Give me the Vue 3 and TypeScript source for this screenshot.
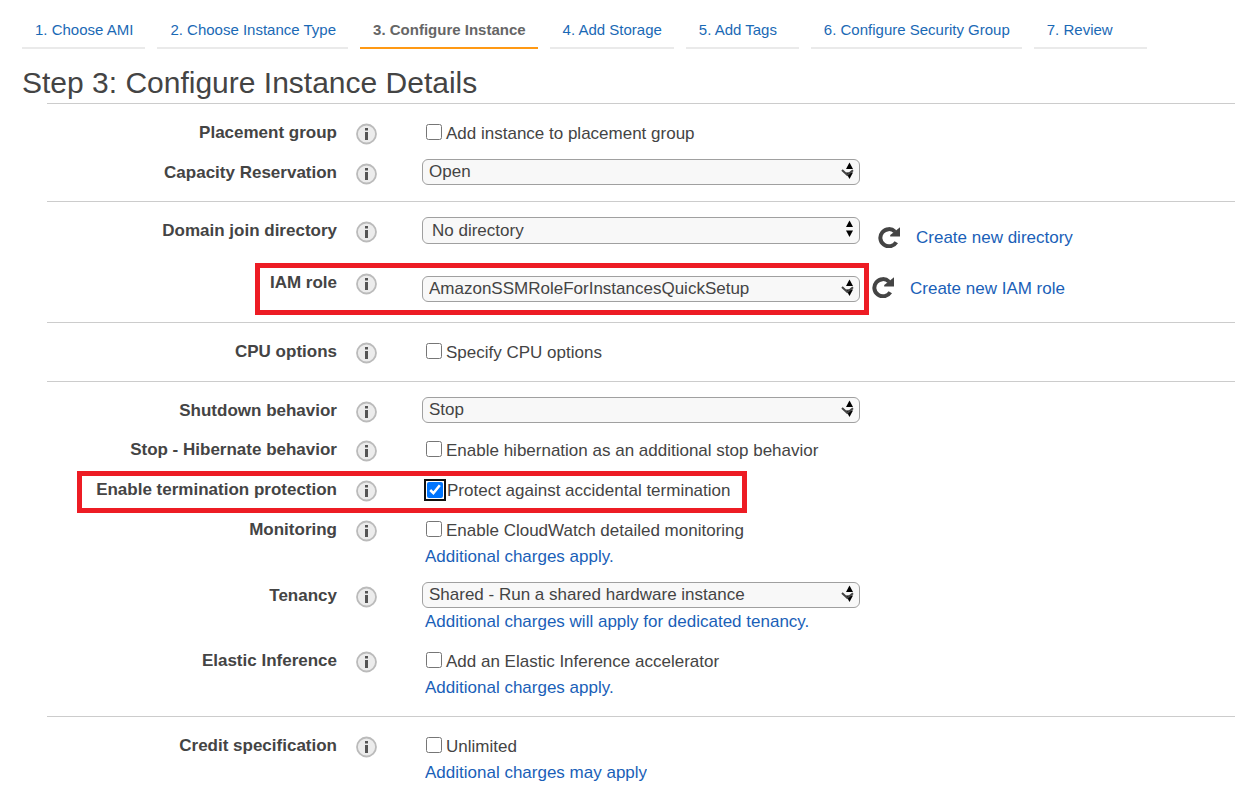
<script setup lang="ts">
import { reactive } from 'vue'

interface Step {
  label: string
  current?: boolean
}

interface Field {
  id: string
  label: string
  kind: 'check' | 'select'
  text: string
  checked?: boolean
  note?: string
  noteCut?: boolean
  plain?: boolean
  action?: string
  mark?: string
  rowClass?: string
}

const steps: Step[] = [
  { label: '1. Choose AMI' },
  { label: '2. Choose Instance Type' },
  { label: '3. Configure Instance', current: true },
  { label: '4. Add Storage' },
  { label: '5. Add Tags' },
  { label: '6. Configure Security Group' },
  { label: '7. Review' },
]

const groups = reactive<Field[][]>([
  [
    { id: 'placement', label: 'Placement group', kind: 'check', text: 'Add instance to placement group' },
    { id: 'capacity', label: 'Capacity Reservation', kind: 'select', text: 'Open' },
  ],
  [
    { id: 'directory', label: 'Domain join directory', kind: 'select', text: 'No directory', plain: true, action: 'Create new directory', rowClass: 'directory' },
    { id: 'iam', label: 'IAM role', kind: 'select', text: 'AmazonSSMRoleForInstancesQuickSetup', action: 'Create new IAM role', mark: 'mark-iam', rowClass: 'iam' },
  ],
  [{ id: 'cpu', label: 'CPU options', kind: 'check', text: 'Specify CPU options' }],
  [
    { id: 'shutdown', label: 'Shutdown behavior', kind: 'select', text: 'Stop' },
    { id: 'hibernate', label: 'Stop - Hibernate behavior', kind: 'check', text: 'Enable hibernation as an additional stop behavior' },
    { id: 'protect', label: 'Enable termination protection', kind: 'check', text: 'Protect against accidental termination', checked: true, mark: 'mark-protect' },
    { id: 'monitoring', label: 'Monitoring', kind: 'check', text: 'Enable CloudWatch detailed monitoring', note: 'Additional charges apply.' },
    { id: 'tenancy', label: 'Tenancy', kind: 'select', text: 'Shared - Run a shared hardware instance', note: 'Additional charges will apply for dedicated tenancy.' },
    { id: 'elastic', label: 'Elastic Inference', kind: 'check', text: 'Add an Elastic Inference accelerator', note: 'Additional charges apply.' },
  ],
  [{ id: 'credit', label: 'Credit specification', kind: 'check', text: 'Unlimited', note: 'Additional charges may apply', noteCut: true }],
])
</script>

<template>
  <main class="page">
    <nav class="steps" aria-label="Launch steps">
      <a v-for="s in steps" :key="s.label" href="#" class="step" :class="{ current: s.current }">{{ s.label }}</a>
    </nav>
    <h1 class="title">Step 3: Configure Instance Details</h1>
    <form class="form" @submit.prevent>
      <section v-for="(group, g) in groups" :key="g" class="group">
        <div v-for="f in group" :key="f.id" class="row" :class="f.rowClass">
          <label class="name" :for="f.id">{{ f.label }}</label>
          <button type="button" class="info" :aria-label="'About ' + f.label">
            <svg viewBox="0 0 22 22" width="22" height="22">
              <circle cx="10.5" cy="11" r="9.5" fill="#ececec" stroke="#bbb" stroke-width="1.8" />
              <rect x="9" y="5" width="3" height="2.5" fill="#555" />
              <rect x="9" y="9" width="3" height="8" fill="#555" />
            </svg>
          </button>
          <div class="control">
            <label v-if="f.kind === 'check'" class="check">
              <input :id="f.id" v-model="f.checked" type="checkbox" :class="{ focused: f.id === 'protect' }" />
              <span>{{ f.text }}</span>
            </label>
            <div v-else class="line">
              <div class="picker" :class="{ plain: f.plain }">
                <select :id="f.id">
                  <option>{{ f.text }}</option>
                </select>
                <svg class="arrows" viewBox="0 0 14 18" width="14" height="18" aria-hidden="true">
                  <path d="M5 7 8.5 .5 12 7Z" fill="#000" />
                  <path d="M5 10.5 8.5 17 12 10.5Z" fill="#000" />
                  <path v-if="!f.plain" d="M1 8 6.3 13 12 8.3" fill="none" stroke="#444" stroke-width="2" />
                </svg>
              </div>
              <template v-if="f.action">
                <button type="button" class="refresh" :aria-label="'Refresh ' + f.label">
                  <svg viewBox="0 0 22 22" width="22" height="22">
                    <path d="M17 5.6A8.6 8.6 0 1 0 18.3 16.2" fill="none" stroke="#444" stroke-width="4" />
                    <path d="M22 1.2V10.4H12.2V9L15.5 6.5Z" fill="#444" />
                  </svg>
                </button>
                <a href="#" class="action">{{ f.action }}</a>
              </template>
            </div>
            <a v-if="f.note" href="#" class="note" :class="{ cut: f.noteCut }">{{ f.note }}</a>
          </div>
          <span v-if="f.mark" class="mark" :class="f.mark"></span>
        </div>
      </section>
    </form>
  </main>
</template>

<style>
body {
  margin: 0;
  background: #fff;
}
</style>

<style scoped>
.page {
  font-family: "Liberation Sans", Arial, sans-serif;
  font-size: 17px;
  line-height: 26px;
  color: #444;
  padding-top: 20px;
  overflow: hidden;
}
a {
  color: #1a5fb8;
  text-decoration: none;
}
.steps {
  display: flex;
  gap: 12px;
  padding-left: 22px;
  font-size: 15px;
  line-height: 20px;
}
.step {
  box-sizing: border-box;
  min-width: 113px;
  padding: 0 12px 7px 13px;
  border-bottom: 2px solid #eaeaea;
  color: #1a69b5;
  white-space: nowrap;
}
.step.current {
  color: #666;
  font-weight: bold;
  border-bottom-color: #ff9914;
}
.title {
  margin: 14px 0 0 22px;
  font-size: 30px;
  line-height: 40px;
  font-weight: normal;
}
.form {
  margin-left: 47px;
}
.group {
  display: flex;
  flex-direction: column;
  gap: 13px;
  padding: 15px 0 16px;
  border-top: 1px solid #ccc;
}
.row {
  position: relative;
  display: grid;
  grid-template-columns: 290px 22px 1fr;
  align-items: start;
}
.name {
  height: 26px;
  line-height: 28px;
  text-align: right;
  font-weight: bold;
}
.info,
.refresh {
  display: block;
  width: 22px;
  height: 22px;
  padding: 0;
  border: 0;
  background: none;
}
.info {
  margin: 4px 0 0 19px;
}
.info svg,
.refresh svg {
  display: block;
}
.control {
  padding-left: 63px;
}
.check {
  display: flex;
  align-items: flex-start;
  width: max-content;
  height: 27px;
  line-height: 30px;
}
.check input {
  width: 16px;
  height: 16px;
  margin: 5px 4px 0;
}
.check input.focused {
  margin: 6px 4px 0 5px;
  border-radius: 2px;
  outline: 2px solid #101010;
  outline-offset: 1px;
}
.line {
  display: flex;
  align-items: flex-start;
}
.picker {
  position: relative;
  width: 438px;
}
.picker select {
  display: block;
  box-sizing: border-box;
  width: 100%;
  height: 26px;
  padding: 0 24px 0 6px;
  border: 1px solid #a0a0a0;
  border-radius: 6px;
  background: #f8f8f8;
  color: #444;
  font: inherit;
  line-height: 24px;
  appearance: none;
}
.picker.plain select {
  height: 27px;
  padding-left: 9px;
}
.arrows {
  position: absolute;
  top: 3px;
  right: 5px;
  pointer-events: none;
}
.refresh {
  margin: 0 16px 0 12px;
}
.note {
  display: block;
  width: max-content;
  height: 26px;
  line-height: 28px;
  margin-left: 3px;
}
.note.cut {
  height: 22px;
  overflow: hidden;
}
.directory {
  padding-bottom: 5px;
}
.directory .refresh {
  margin: 9px 16px 0 18px;
}
.directory .action {
  margin-top: 8px;
}
.iam {
  padding-bottom: 4px;
}
.iam .line {
  margin-top: 7px;
}
.mark {
  position: absolute;
  box-sizing: border-box;
  border: 5px solid #ed1c24;
  pointer-events: none;
}
.mark-iam {
  top: -6px;
  left: 208px;
  width: 614px;
  height: 52px;
}
.mark-protect {
  top: -5px;
  left: 30px;
  width: 670px;
  height: 42px;
}
</style>
